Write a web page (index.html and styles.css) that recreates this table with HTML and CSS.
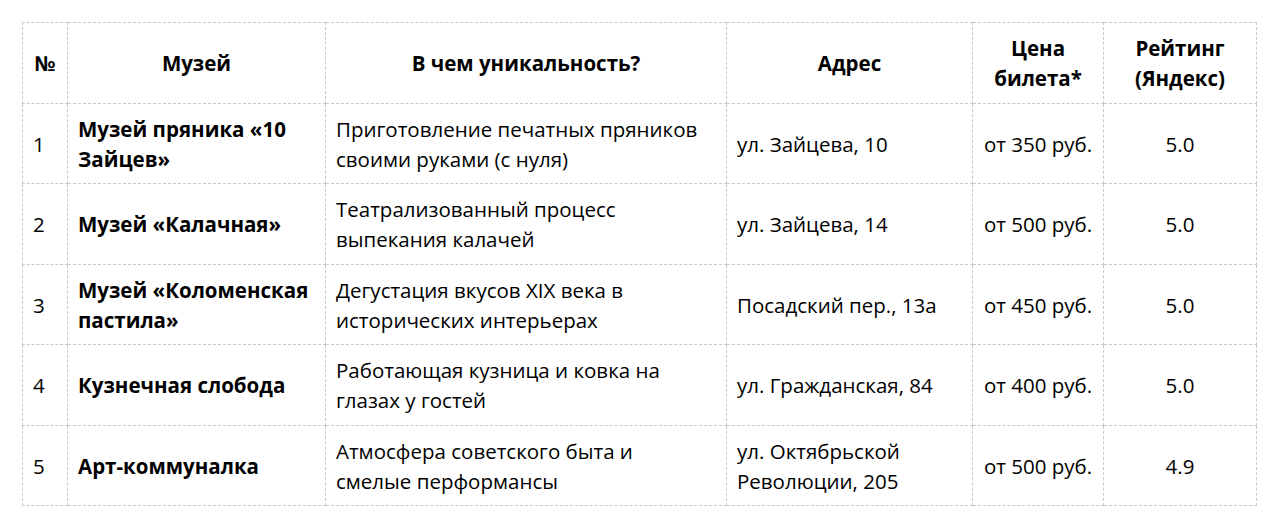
FILE: index.html
```html
<!DOCTYPE html>
<html lang="ru">
<head>
<meta charset="utf-8">
<link rel="stylesheet" href="styles.css">
</head>
<body>
<table class="museums">
  <colgroup>
    <col class="c-num">
    <col class="c-name">
    <col class="c-uniq">
    <col class="c-addr">
    <col class="c-price">
    <col class="c-rate">
  </colgroup>
  <thead>
    <tr>
      <th>№</th>
      <th>Музей</th>
      <th>В чем уникальность?</th>
      <th>Адрес</th>
      <th>Цена билета*</th>
      <th>Рейтинг (Яндекс)</th>
    </tr>
  </thead>
  <tbody>
    <tr>
      <td>1</td>
      <td class="name">Музей пряника «10 Зайцев»</td>
      <td class="desc">Приготовление печатных пряников своими руками (с нуля)</td>
      <td>ул. Зайцева, 10</td>
      <td class="center nowrap">от 350 руб.</td>
      <td class="center">5.0</td>
    </tr>
    <tr>
      <td>2</td>
      <td class="name">Музей «Калачная»</td>
      <td class="desc">Театрализованный процесс выпекания калачей</td>
      <td>ул. Зайцева, 14</td>
      <td class="center nowrap">от 500 руб.</td>
      <td class="center">5.0</td>
    </tr>
    <tr>
      <td>3</td>
      <td class="name">Музей «Коломенская пастила»</td>
      <td class="desc">Дегустация вкусов XIX века в исторических интерьерах</td>
      <td>Посадский пер., 13а</td>
      <td class="center nowrap">от 450 руб.</td>
      <td class="center">5.0</td>
    </tr>
    <tr>
      <td>4</td>
      <td class="name">Кузнечная слобода</td>
      <td class="desc">Работающая кузница и ковка на глазах у гостей</td>
      <td>ул. Гражданская, 84</td>
      <td class="center nowrap">от 400 руб.</td>
      <td class="center">5.0</td>
    </tr>
    <tr>
      <td>5</td>
      <td class="name">Арт-коммуналка</td>
      <td class="desc">Атмосфера советского быта и смелые перформансы</td>
      <td>ул. Октябрьской Революции, 205</td>
      <td class="center nowrap">от 500 руб.</td>
      <td class="center">4.9</td>
    </tr>
  </tbody>
</table>
</body>
</html>
```
FILE: styles.css
```css
html, body {
  margin: 0;
  padding: 0;
  background: #fff;
}
body {
  padding: 22px;
  font-family: "Open Sans", "Noto Sans", "Liberation Sans", sans-serif;
  font-size: 20.5px;
  line-height: 30px;
  color: #000;
}
.museums {
  width: 1234px;
  border-collapse: collapse;
  table-layout: fixed;
}
.c-num { width: 45px; }
.c-name { width: 258px; }
.c-uniq { width: 401px; }
.c-addr { width: 246px; }
.c-price { width: 131px; }
.c-rate { width: 153px; }
.museums th,
.museums td {
  border: 1px dashed #c8c8c8;
  padding: 10px 10px 9.5px 10px;
  vertical-align: middle;
  height: 59.5px;
}
.museums th {
  font-weight: 700;
  text-align: center;
}
.museums td {
  text-align: left;
}
.museums td.name {
  font-weight: 700;
}
.museums td.desc {
  padding-right: 18px;
}
.museums td.center {
  text-align: center;
}
.museums td.nowrap {
  white-space: nowrap;
  padding-left: 0;
  padding-right: 0;
}
```
